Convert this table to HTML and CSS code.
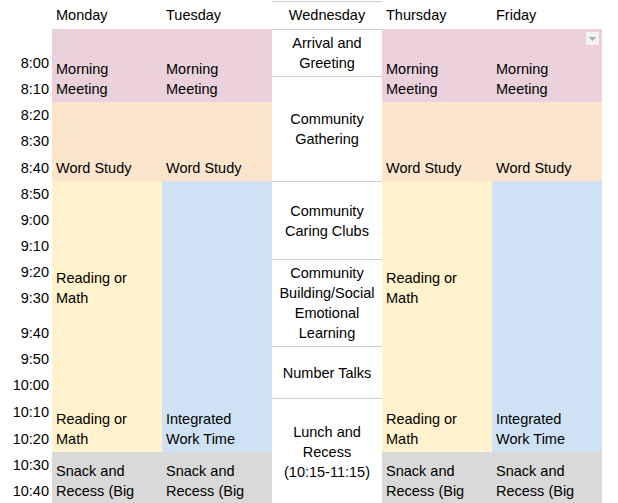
FILE: index.html
```html
<!DOCTYPE html>
<html>
<head>
<meta charset="utf-8">
<link rel="stylesheet" href="styles.css">
</head>
<body>
<div class="sheet">
  <div class="c time r1"></div>
  <div class="c head col2 r1">Monday</div>
  <div class="c head col3 r1">Tuesday</div>
  <div class="c head wed col4 r1">Wednesday</div>
  <div class="c head col5 r1">Thursday</div>
  <div class="c head col6 r1">Friday</div>

  <div class="c time" style="grid-row:2">8:00</div>
  <div class="c time" style="grid-row:3">8:10</div>
  <div class="c time" style="grid-row:4">8:20</div>
  <div class="c time" style="grid-row:5">8:30</div>
  <div class="c time" style="grid-row:6">8:40</div>
  <div class="c time" style="grid-row:7">8:50</div>
  <div class="c time" style="grid-row:8">9:00</div>
  <div class="c time" style="grid-row:9">9:10</div>
  <div class="c time" style="grid-row:10">9:20</div>
  <div class="c time" style="grid-row:11">9:30</div>
  <div class="c time" style="grid-row:12">9:40</div>
  <div class="c time" style="grid-row:13">9:50</div>
  <div class="c time" style="grid-row:14">10:00</div>
  <div class="c time" style="grid-row:15">10:10</div>
  <div class="c time" style="grid-row:16">10:20</div>
  <div class="c time" style="grid-row:17">10:30</div>
  <div class="c time" style="grid-row:18">10:40</div>

  <!-- Monday -->
  <div class="c purple col2 rMM">Morning Meeting</div>
  <div class="c peach col2 rWS">Word Study</div>
  <div class="c yellow col2 rRM1">Reading or Math</div>
  <div class="c yellow col2 rRM2">Reading or Math</div>
  <div class="c gray top col2 rSN">Snack and Recess (Big</div>

  <!-- Tuesday -->
  <div class="c purple col3 rMM">Morning Meeting</div>
  <div class="c peach col3 rWS">Word Study</div>
  <div class="c blue col3 rIW">Integrated Work Time</div>
  <div class="c gray top col3 rSN">Snack and Recess (Big</div>

  <!-- Wednesday -->
  <div class="c wed col4 rAR">Arrival and Greeting</div>
  <div class="c wed mid col4 rCG">Community Gathering</div>
  <div class="c wed mid col4 rCC">Community Caring Clubs</div>
  <div class="c wed mid col4 rCB">Community Building/Social Emotional Learning</div>
  <div class="c wed mid col4 rNT">Number Talks</div>
  <div class="c wed mid col4 rLR"><span>Lunch and Recess <span class="nw">(10:15-11:15)</span></span></div>

  <!-- Thursday -->
  <div class="c purple col5 rMM">Morning Meeting</div>
  <div class="c peach col5 rWS">Word Study</div>
  <div class="c yellow col5 rRM1">Reading or Math</div>
  <div class="c yellow col5 rRM2">Reading or Math</div>
  <div class="c gray top col5 rSN">Snack and Recess (Big</div>

  <!-- Friday -->
  <div class="c purple col6 rMM">Morning Meeting<span class="dd"><svg width="7" height="4" viewBox="0 0 7 4"><path d="M0 0H7L3.5 4Z" fill="#a8a8a8"/></svg></span></div>
  <div class="c peach col6 rWS">Word Study</div>
  <div class="c blue col6 rIW">Integrated Work Time</div>
  <div class="c gray top col6 rSN">Snack and Recess (Big</div>
</div>
</body>
</html>
```

FILE: styles.css
```css
html, body {
  margin: 0;
  padding: 0;
  background: #fff;
  overflow: hidden;
  height: 503px;
}
body {
  padding-top: 1px;
  box-sizing: border-box;
  font-family: "Liberation Sans", Arial, sans-serif;
  font-size: 14.5px;
  line-height: 20px;
  color: #000;
}
.sheet {
  display: grid;
  grid-template-columns: 52px repeat(5, 110px);
  grid-template-rows: 28px 47px 26px 26px 26px 27px 26px 26px 26px 26px 26px 35px 26px 26px 27px 27px 26px 26px;
}
.c {
  box-sizing: border-box;
  padding: 0 4px 3px 4px;
  display: flex;
  flex-direction: column;
  justify-content: flex-end;
  overflow: hidden;
  position: relative;
}
.time {
  grid-column: 1;
  text-align: right;
  padding: 0 3px 3px 0;
  white-space: nowrap;
}
.r1 { grid-row: 1; }
.head { padding-bottom: 4px; }
.col2 { grid-column: 2; }
.col3 { grid-column: 3; }
.col4 { grid-column: 4; }
.col5 { grid-column: 5; }
.col6 { grid-column: 6; }

.rMM { grid-row: 2 / 4; }
.rWS { grid-row: 4 / 7; }
.rRM1 { grid-row: 7 / 12; }
.rRM2 { grid-row: 12 / 17; }
.rIW { grid-row: 7 / 17; }
.rSN { grid-row: 17 / 19; }

.rAR { grid-row: 2 / 3; }
.rCG { grid-row: 3 / 7; }
.rCC { grid-row: 7 / 10; }
.rCB { grid-row: 10 / 13; }
.rNT { grid-row: 13 / 15; }
.rLR { grid-row: 15 / 19; }

.purple { background: #ead1dc; }
.peach { background: #fce5cd; }
.yellow { background: #fff2cc; }
.blue { background: #cfe2f3; }
.gray { background: #d9d9d9; }

.top {
  justify-content: flex-start;
  padding-top: 9px;
  padding-bottom: 0;
}
.wed {
  text-align: center;
  border-top: 1px solid #cfcfcf;
}
.mid {
  justify-content: center;
  padding-bottom: 0;
}
.nw { white-space: nowrap; }
.dd {
  position: absolute;
  top: 3px;
  right: 3px;
  width: 13px;
  height: 13px;
  background: #f4f4f4;
  display: flex;
  align-items: center;
  justify-content: center;
}
.dd svg { display: block; }
```
